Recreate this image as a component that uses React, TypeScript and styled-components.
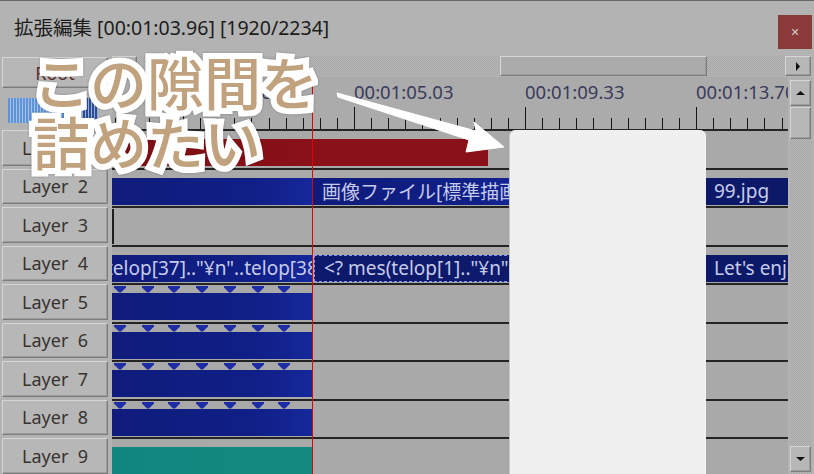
import React from "react"
import styled, { createGlobalStyle } from "styled-components"

const GlobalStyle = createGlobalStyle`
  html, body {
    margin: 0;
    padding: 0;
    background: #b3b3b3;
    overflow: hidden;
  }
  body {
    font-family: "Noto Sans", "Noto Sans CJK JP", sans-serif;
  }
`

const ROW_H = 38.5
const TICK = 17.1
const FIRST_MAJOR = 71

type Clip = {
    from: number
    to: number
    kind: "red" | "blue" | "navy" | "teal" | "selected"
    text?: string
    shift?: number
}

type Layer = {
    name: string
    clips: Clip[]
    keys?: boolean
    marker?: boolean
}

const keyXs = [8, 36, 62, 90, 118, 146, 172]

const layers: Layer[] = [
    { name: "Layer  1", clips: [{ from: 0, to: 376, kind: "red" }] },
    {
        name: "Layer  2",
        clips: [
            { from: 0, to: 200, kind: "blue" },
            { from: 201, to: 420, kind: "blue", text: "画像ファイル[標準描画]" },
            { from: 593, to: 676, kind: "navy", text: "99.jpg" }
        ]
    },
    { name: "Layer  3", clips: [], marker: true },
    {
        name: "Layer  4",
        clips: [
            { from: 0, to: 200, kind: "blue", text: "telop[37]..\"¥n\"..telop[38]", shift: -6 },
            { from: 202, to: 420, kind: "selected", text: "<? mes(telop[1]..\"¥n\"..telop[2])" },
            { from: 593, to: 676, kind: "navy", text: "Let's enjoy" }
        ]
    },
    { name: "Layer  5", clips: [{ from: 0, to: 200, kind: "blue" }], keys: true },
    { name: "Layer  6", clips: [{ from: 0, to: 200, kind: "blue" }], keys: true },
    { name: "Layer  7", clips: [{ from: 0, to: 200, kind: "blue" }], keys: true },
    { name: "Layer  8", clips: [{ from: 0, to: 200, kind: "blue" }], keys: true },
    { name: "Layer  9", clips: [{ from: 0, to: 200, kind: "teal" }] }
]

const labels = ["00:01:00.66", "00:01:05.03", "00:01:09.33", "00:01:13.70"]

const ticks: { x: number; major: boolean }[] = []
for (let i = -4; i < 40; i++) {
    const x = FIRST_MAJOR + i * TICK
    if (x < 1 || x > 676) continue
    ticks.push({ x, major: i % 10 === 0 })
}

const clipBg = {
    red: "linear-gradient(90deg, #7f0e14, #8b1118 60%, #8a1118)",
    blue: "linear-gradient(90deg, #0f1c7c, #101f86 70%, #15279a)",
    navy: "#0c1868",
    teal: "linear-gradient(90deg, #10877e, #138a80)",
    selected: "#0d1a6c"
}

export default function App() {
    return (
        <S.Page>
            <GlobalStyle />
            <S.TitleBar>
                <S.Title>拡張編集 [00:01:03.96] [1920/2234]</S.Title>
                <S.CloseButton>✕</S.CloseButton>
            </S.TitleBar>

            <S.Body>
                <S.LeftHead>
                    <S.RootButton>Root</S.RootButton>
                    <S.Meter />
                </S.LeftHead>

                <S.HScroll>
                    <S.SmallButton />
                    <S.Track>
                        <S.HThumb />
                    </S.Track>
                    <S.ArrowButton>
                        <svg width="6" height="9" viewBox="0 0 6 9">
                            <path d="M1 0 L5 4.5 L1 9 Z" fill="#111" />
                        </svg>
                    </S.ArrowButton>
                </S.HScroll>

                <S.Ruler>
                    {labels.map((l, i) => (
                        <S.TimeLabel key={l} style={{ left: FIRST_MAJOR + i * TICK * 10 }}>
                            {l}
                        </S.TimeLabel>
                    ))}
                    {ticks.map((t) => (
                        <S.Tick key={t.x} $major={t.major} style={{ left: t.x }} />
                    ))}
                </S.Ruler>

                <S.LayerList>
                    {layers.map((l) => (
                        <S.LayerButton key={l.name}>{l.name}</S.LayerButton>
                    ))}
                </S.LayerList>

                <S.Tracks>
                    {layers.map((l) => (
                        <S.TrackRow key={l.name}>
                            {l.keys && (
                                <S.Keys width="676" height="8">
                                    {keyXs.map((x) => (
                                        <polygon
                                            key={x}
                                            points={`${x - 6},0 ${x + 6},0 ${x + 6},1.5 ${x + 1},6.5 ${x - 1},6.5 ${x - 6},1.5`}
                                            fill="#1e2ca6"
                                        />
                                    ))}
                                </S.Keys>
                            )}
                            {l.marker && <S.Marker />}
                            {l.clips.map((c) => (
                                <S.ClipBox
                                    key={c.from}
                                    $kind={c.kind}
                                    style={{ left: c.from, width: c.to - c.from }}
                                >
                                    {c.text && (
                                        <S.ClipText style={c.shift ? { marginLeft: c.shift, paddingLeft: 0 } : undefined}>
                                            {c.text}
                                        </S.ClipText>
                                    )}
                                </S.ClipBox>
                            ))}
                        </S.TrackRow>
                    ))}
                </S.Tracks>

                <S.VScroll>
                    <S.VTrack>
                        <S.VButton>
                            <svg width="9" height="6" viewBox="0 0 9 6">
                                <path d="M0 5 L4.5 1 L9 5 Z" fill="#111" />
                            </svg>
                        </S.VButton>
                        <S.VThumb />
                        <S.Spacer />
                        <S.VButton>
                            <svg width="9" height="6" viewBox="0 0 9 6">
                                <path d="M0 1 L4.5 5 L9 1 Z" fill="#111" />
                            </svg>
                        </S.VButton>
                    </S.VTrack>
                </S.VScroll>
            </S.Body>

            <S.Cursor />
            <S.Highlight />
            <S.Arrow width="814" height="474" viewBox="0 0 814 474">
                <polygon
                    points="337,93 476,131 474,122 504,147 466,152 469,140 338,97"
                    fill="#ffffff"
                    stroke="#ffffff"
                    strokeWidth="1"
                    strokeLinejoin="round"
                />
            </S.Arrow>
            <S.Annotation>
                この隙間を
                <br />
                詰めたい
            </S.Annotation>
        </S.Page>
    )
}

const bevel = `
    box-sizing: border-box;
    background: #b7b7b7;
    border: 1px solid;
    border-color: #d6d6d6 #7c7c7c #7c7c7c #d6d6d6;
    box-shadow: inset -1px -1px 0 #9c9c9c;
`

const checker = `
    background-color: #b0b0b0;
    background-image: repeating-conic-gradient(#a7a7a7 0 25%, #b7b7b7 0 50%);
    background-size: 2px 2px;
`

const S = {
    Page: styled.div`
        position: relative;
        width: 814px;
        height: 474px;
        overflow: hidden;
        background: #b3b3b3;
        font-family: "Noto Sans", "Noto Sans CJK JP", sans-serif;
    `,
    TitleBar: styled.div`
        height: 55px;
        box-sizing: border-box;
        border-top: 1px solid #6a6a6a;
        display: flex;
        align-items: flex-start;
        padding: 0 2px 0 14px;
    `,
    Title: styled.div`
        flex: 1;
        padding-top: 14px;
        font-size: 19.5px;
        line-height: 26px;
        color: #1c1c1c;
        white-space: nowrap;
    `,
    CloseButton: styled.div`
        margin-top: 14px;
        width: 34px;
        height: 34px;
        background: #8b3a3a;
        color: #cfcfcf;
        display: flex;
        align-items: center;
        justify-content: center;
        font-family: "DejaVu Sans", sans-serif;
        font-size: 11px;
        font-weight: 700;
    `,
    Body: styled.div`
        display: grid;
        grid-template-columns: 112px 676px 24px;
        grid-template-rows: 22px 52px 1fr;
        height: 419px;
    `,
    LeftHead: styled.div`
        grid-row: 1 / 3;
        grid-column: 1;
        display: flex;
        flex-direction: column;
        padding: 2px 4px 0 2px;
    `,
    RootButton: styled.div`
        ${bevel}
        height: 31px;
        display: flex;
        align-items: center;
        justify-content: center;
        font-size: 18px;
        color: #5b3030;
    `,
    Meter: styled.div`
        margin: 10px 0 0 6px;
        width: 90px;
        height: 25px;
        background-image: repeating-linear-gradient(90deg, transparent 0 2px, rgba(190, 208, 232, 0.75) 2px 3px),
            linear-gradient(90deg, #5d93d7 0 72%, #2c4c98 72% 100%);
    `,
    HScroll: styled.div`
        grid-row: 1;
        grid-column: 2 / 4;
        display: flex;
        padding: 1px 1px 1px 0;
    `,
    SmallButton: styled.div`
        ${bevel}
        width: 25px;
    `,
    Track: styled.div`
        ${checker}
        flex: 1;
        display: flex;
    `,
    HThumb: styled.div`
        ${bevel}
        background: #ababab;
        margin-left: 363px;
        width: 207px;
    `,
    ArrowButton: styled.div`
        ${bevel}
        width: 26px;
        display: flex;
        align-items: center;
        justify-content: center;
    `,
    Ruler: styled.div`
        grid-row: 2;
        grid-column: 2;
        position: relative;
        overflow: hidden;
        background: #ababab;
    `,
    TimeLabel: styled.div`
        position: absolute;
        top: 3px;
        font-size: 18.5px;
        line-height: 24px;
        color: #3a3a5c;
        white-space: nowrap;
    `,
    Tick: styled.div<{ $major: boolean }>`
        position: absolute;
        bottom: 0;
        width: 1px;
        height: ${(p) => (p.$major ? 22 : 11)}px;
        background: #141414;
    `,
    LayerList: styled.div`
        grid-row: 3;
        grid-column: 1;
        overflow: hidden;
        display: flex;
        flex-direction: column;
    `,
    LayerButton: styled.div`
        ${bevel}
        flex: none;
        height: ${ROW_H - 3}px;
        margin: 1px 4px 2px 2px;
        display: flex;
        align-items: center;
        justify-content: center;
        font-size: 18px;
        color: #38332e;
        white-space: pre;
    `,
    Tracks: styled.div`
        grid-row: 3;
        grid-column: 2;
        overflow: hidden;
        display: flex;
        flex-direction: column;
        background: #a9a9a9;
    `,
    TrackRow: styled.div`
        flex: none;
        position: relative;
        box-sizing: border-box;
        height: ${ROW_H}px;
        border-top: 2px solid #242424;
    `,
    Keys: styled.svg`
        position: absolute;
        left: 0;
        top: 1px;
    `,
    Marker: styled.div`
        position: absolute;
        left: 0;
        top: 1px;
        bottom: 1px;
        width: 2px;
        background: #1e1e1e;
    `,
    ClipBox: styled.div<{ $kind: Clip["kind"] }>`
        position: absolute;
        top: 8px;
        height: 27px;
        box-sizing: border-box;
        overflow: hidden;
        background: ${(p) => clipBg[p.$kind]};
        border: ${(p) => (p.$kind === "selected" ? "1.5px dashed #8595f2" : "none")};
        display: flex;
        align-items: center;
    `,
    ClipText: styled.span`
        padding-left: 9px;
        font-size: 19px;
        color: #c6cbe9;
        white-space: nowrap;
    `,
    VScroll: styled.div`
        grid-row: 2 / 4;
        grid-column: 3;
        padding-left: 2px;
        display: flex;
    `,
    VTrack: styled.div`
        ${checker}
        flex: 1;
        display: flex;
        flex-direction: column;
        padding: 3px 1px 2px 0;
    `,
    VButton: styled.div`
        ${bevel}
        height: 26px;
        display: flex;
        align-items: center;
        justify-content: center;
    `,
    VThumb: styled.div`
        ${bevel}
        margin-top: 1px;
        height: 32px;
    `,
    Spacer: styled.div`
        flex: 1;
    `,
    Cursor: styled.div`
        position: absolute;
        left: 312px;
        top: 80px;
        bottom: 0;
        width: 1px;
        background: #e00000;
    `,
    Highlight: styled.div`
        position: absolute;
        left: 510px;
        top: 130px;
        width: 196px;
        height: 352px;
        border-radius: 6px;
        background: #f0f0f0;
        box-shadow: -1px 0 0 #c6c6c6;
    `,
    Arrow: styled.svg`
        position: absolute;
        left: 0;
        top: 0;
        pointer-events: none;
    `,
    Annotation: styled.div`
        position: absolute;
        left: 33px;
        top: 50px;
        font-family: "Noto Sans CJK JP", sans-serif;
        font-size: 57px;
        font-weight: 500;
        line-height: 60px;
        color: #c1a27e;
        -webkit-text-stroke: 12px #ffffff;
        paint-order: stroke fill;
        stroke-linejoin: round;
        white-space: nowrap;
        filter: drop-shadow(0 0 1px rgba(0, 0, 0, 0.25));
    `
}
